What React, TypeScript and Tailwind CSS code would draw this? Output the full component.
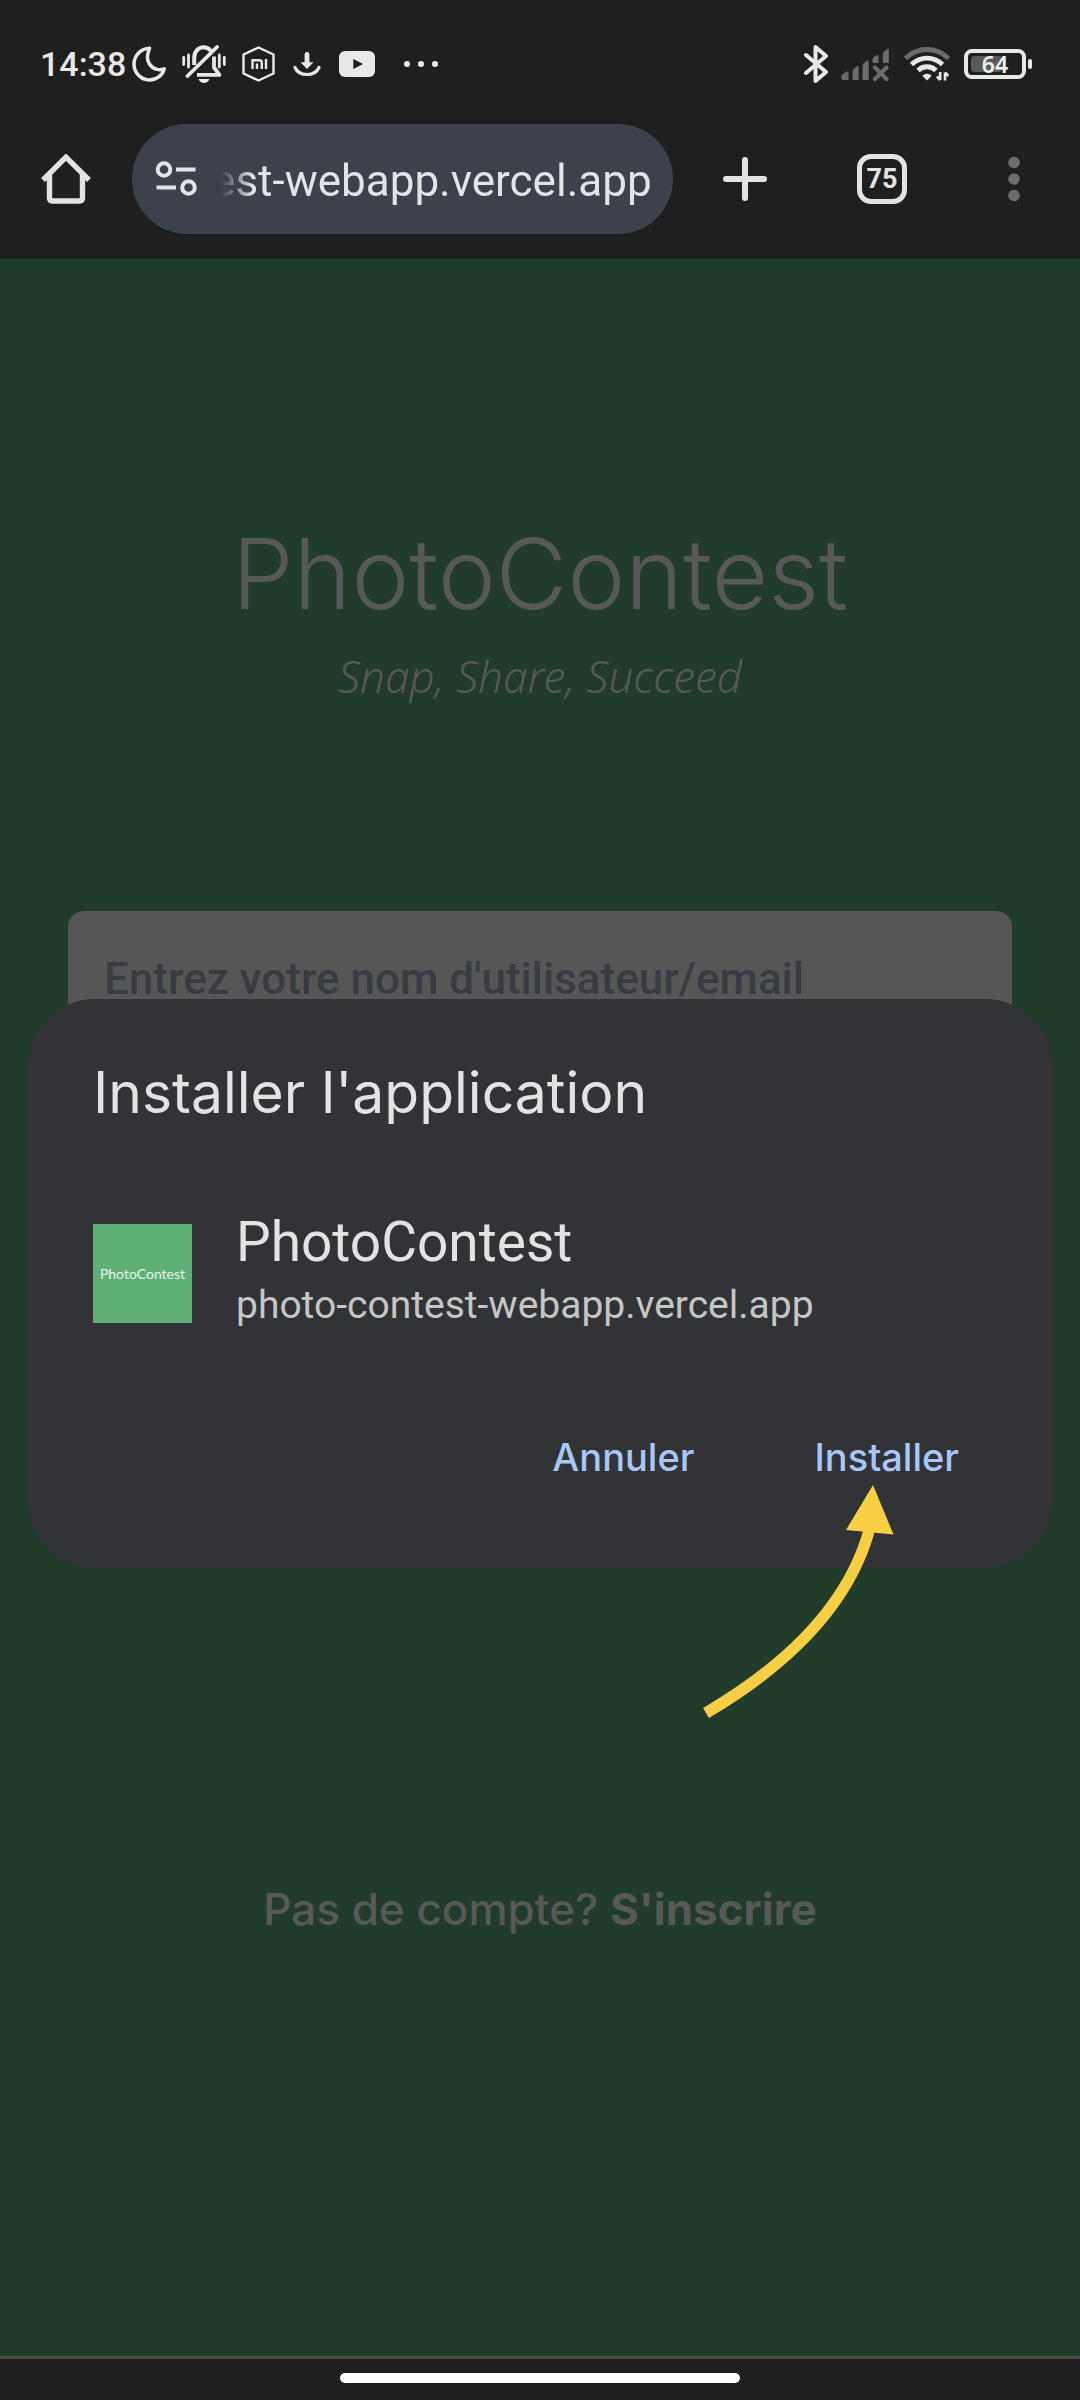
import { useEffect, useRef } from "react";

function MoonIcon() {
  return (
    <svg width="34" height="36" viewBox="0 0 34 36" fill="none" stroke="#e8e8e8" strokeWidth="3.5" strokeLinejoin="round" aria-hidden="true">
      <path d="M17.5 2.2C9 2.4 2 9.3 2 18c0 8.900 7 16 15.500 16 7.500 0 13.200-5 14.700-11.200-2.200.9-4.700 1.200-7.200.6-6.500-1.500-10.600-8-9.300-14.600.4-2.400 1-4.400 1.800-6.600z" />
    </svg>
  );
}

function BellOffIcon() {
  return (
    <svg width="44" height="38" viewBox="0 0 44 38" fill="none" stroke="#e8e8e8" strokeWidth="3.2" aria-hidden="true">
      <path d="M12.200 20V13C12.200 6.500 16.500 2.300 21.500 2.300c3 0 5.500 1.300 7.300 3.400" strokeWidth="4" />
      <path d="M5.500 31 35 2" strokeWidth="3.800" strokeLinecap="round" />
      <path d="M15 29.800H37.500L32 22.500V11.500" strokeWidth="3.800" strokeLinejoin="round" />
      <path d="M16.500 34h11c-1.200 2.600-3 4-5.500 4s-4.300-1.400-5.500-4z" fill="#e8e8e8" stroke="none" />
      <path d="M1.700 12.500v7M6.500 10v12M37.300 10v12M42.300 12.500v7" strokeWidth="2.800" strokeLinecap="round" />
    </svg>
  );
}

function MiIcon() {
  return (
    <svg width="33" height="36" viewBox="0 0 33 36" fill="none" stroke="#e8e8e8" strokeWidth="2.4" aria-hidden="true">
      <path d="M16.500 1.500 31.500 8.500V27.500L16.500 34.500 1.500 27.500V8.500z" strokeLinejoin="round" />
      <path d="M10.500 23V14.200h6.800q2.500 0 2.500 2.500V23M15 23v-5.500M24 23V13" />
    </svg>
  );
}

function DownloadIcon() {
  return (
    <svg width="28" height="25" viewBox="0 0 28 25" fill="none" stroke="#e8e8e8" aria-hidden="true">
      <path d="M14 2.500V11" strokeWidth="4.800" strokeLinecap="round" />
      <path d="M7.500 10.200h13L14 17z" fill="#e8e8e8" stroke="none" />
      <path d="M2 15.500c2 4.500 6.500 7 12 7s10-2.500 12-7" strokeWidth="3.200" strokeLinecap="round" />
    </svg>
  );
}

function VideoIcon() {
  return (
    <svg width="36" height="26" viewBox="0 0 36 26" aria-hidden="true">
      <rect width="36" height="26" rx="6" fill="#e8e8e8" />
      <path d="M14.300 8v10L24 13z" fill="#1f1f1f" />
    </svg>
  );
}

function MoreNotificationsIcon() {
  return (
    <svg width="36" height="8" viewBox="0 0 36 8" fill="#e8e8e8" aria-hidden="true">
      <circle cx="4" cy="4" r="3" />
      <circle cx="18" cy="4" r="3" />
      <circle cx="32" cy="4" r="3" />
    </svg>
  );
}

function BluetoothIcon() {
  return (
    <svg width="24" height="38" viewBox="0 0 24 38" fill="none" stroke="#e8e8e8" strokeWidth="4" strokeLinecap="round" strokeLinejoin="round" aria-hidden="true">
      <path d="M2 10 22 27 11.500 36V2L22 11 2 28" />
    </svg>
  );
}

function SignalIcon() {
  return (
    <svg width="50" height="34" viewBox="0 0 50 34" fill="#6b6b6b" aria-hidden="true">
      <path d="M.5 29q0-1.500 1.500-2.300l4-2.200q1.500-.5 1.500 1V33H2q-1.500 0-1.500-1.500zM11.500 24q0-1.500 1.500-2.500l3-2.200q1.700-.8 1.700 1V33h-4.700q-1.500 0-1.500-1.500zM21.500 18.500q0-1.500 1.300-2.500l3.200-2.500q1.700-.8 1.700 1V33H23q-1.500 0-1.500-1.500zM31.500 12.500q0-1.500 1.300-2.300l3.200-2.200q1.500-.5 1.500 1V16h-4.500q-1.500 0-1.500-1.500zM41.800 7q0-1.500 1.300-2.500l3.200-2.500q1.500-.8 1.500 1V16h-4.500q-1.500 0-1.500-1.500z" />
      <path d="M34 20.500 45.500 32M45.500 20.500 34 32" stroke="#6b6b6b" strokeWidth="4.200" strokeLinecap="round" />
    </svg>
  );
}

function WifiIcon() {
  return (
    <svg width="47" height="36" viewBox="0 0 47 36" fill="none" stroke="#e8e8e8" strokeWidth="4.800" aria-hidden="true">
      <path d="M1.500 12.500C13.500.5 32.500.5 44.500 12.500" stroke="#6b6b6b" />
      <path d="M7.500 18.500c9-8.500 22-8.500 31 0" />
      <path d="M14 24.500c5-5 13-5 18 0" />
      <path d="M18.300 29.700c2.700-2.700 6.700-2.700 9.400 0L23 34.500z" fill="#e8e8e8" stroke="none" />
      <path d="M36.200 26v8M33 30.500l3.200 3.500M41 34.500v-8M44.300 30 41 26.500" strokeWidth="2.600" />
    </svg>
  );
}

function Battery() {
  return (
    <div className="flex items-center gap-0.5" role="img" aria-label="Batterie 64 %">
      <div className="relative flex h-[30px] w-[62px] items-center justify-center rounded-lg border-4 border-[#e8e8e8]">
        <span className="absolute left-[3px] h-4 w-[31px] rounded-sm bg-[#5a5a5a]" />
        <span className="relative font-['Noto_Sans',sans-serif] text-[23px] leading-6 font-semibold text-[#f0f0f0]">64</span>
      </div>
      <span className="h-[10px] w-1 rounded-sm bg-[#e8e8e8]" />
    </div>
  );
}

function HomeIcon() {
  return (
    <svg width="50" height="50" viewBox="0 0 50 50" fill="none" stroke="#e3e3e3" strokeWidth="5.400" strokeLinejoin="round" aria-hidden="true">
      <path d="M2 26 25 3.200 48 26" strokeLinejoin="miter" strokeMiterlimit="2" />
      <path d="M8.500 21v23q0 3 3 3h27q3 0 3-3V21" />
    </svg>
  );
}

function SiteSettingsIcon() {
  return (
    <svg width="42" height="36" viewBox="0 0 42 36" fill="none" stroke="#e3e3e8" strokeWidth="4" aria-hidden="true">
      <circle cx="9" cy="8.500" r="6.300" />
      <path d="M21 8.500h19.500M1.500 26.500H21" />
      <circle cx="33.500" cy="26.500" r="6.300" />
    </svg>
  );
}

function PlusIcon() {
  return (
    <svg width="44" height="44" viewBox="0 0 44 44" stroke="#e3e3e3" strokeWidth="6" strokeLinecap="round" aria-hidden="true">
      <path d="M22 3v38M3 22h38" />
    </svg>
  );
}

function MenuIcon() {
  return (
    <svg width="12" height="46" viewBox="0 0 12 46" fill="#6d6d6d" aria-hidden="true">
      <circle cx="6" cy="6.500" r="5.800" />
      <circle cx="6" cy="23" r="5.800" />
      <circle cx="6" cy="39.500" r="5.800" />
    </svg>
  );
}

function StatusBar() {
  return (
    <div className="flex h-[124px] items-center justify-between pt-1 pr-12 pl-10">
      <div className="flex items-center gap-1.5">
        <time className="font-['Roboto',sans-serif] text-[34px] leading-10 font-medium text-[#e8e8e8]">14:38</time>
        <div className="flex items-center gap-7">
          <div className="flex items-center gap-4">
            <MoonIcon />
            <BellOffIcon />
            <MiIcon />
            <span className="flex items-center gap-[18px] pl-0.5">
              <DownloadIcon />
              <VideoIcon />
            </span>
          </div>
          <MoreNotificationsIcon />
        </div>
      </div>
      <div className="flex items-center gap-[13px]">
        <BluetoothIcon />
        <SignalIcon />
        <WifiIcon />
        <Battery />
      </div>
    </div>
  );
}

function AddressBar() {
  const field = useRef<HTMLInputElement>(null);
  useEffect(() => {
    if (field.current) field.current.scrollLeft = field.current.scrollWidth;
  }, []);
  return (
    <div className="mr-[50px] ml-[41px] flex h-[110px] min-w-0 flex-1 items-center gap-6 rounded-full bg-[#3c414b] pr-[21px] pl-[23px]">
      <button type="button" aria-label="Informations sur le site" className="shrink-0">
        <SiteSettingsIcon />
      </button>
      <input
        ref={field}
        type="text"
        aria-label="Adresse"
        defaultValue="photo-contest-webapp.vercel.app"
        className="h-16 min-w-0 flex-1 bg-transparent pt-1 font-['Roboto',sans-serif] text-[44px] text-[#e3e3e8] outline-none [mask-image:linear-gradient(to_right,transparent,black_32px)]"
      />
    </div>
  );
}

function Toolbar() {
  return (
    <div className="flex items-center pr-[60px] pb-[22px] pl-[41px]">
      <button type="button" aria-label="Accueil">
        <HomeIcon />
      </button>
      <AddressBar />
      <button type="button" aria-label="Nouvel onglet">
        <PlusIcon />
      </button>
      <button
        type="button"
        aria-label="75 onglets"
        className="mr-[101px] ml-[90px] flex size-[50px] items-center justify-center rounded-[14px] border-[5px] border-[#e3e3e3] font-['Roboto',sans-serif] text-[27px] leading-8 font-bold text-[#e3e3e3]"
      >
        75
      </button>
      <button type="button" aria-label="Menu">
        <MenuIcon />
      </button>
    </div>
  );
}

function LoginPage() {
  return (
    <main className="flex-1 bg-[#213c2a] px-[68px] pt-[255px] text-[#575957]">
      <h1 className="text-center font-['Inter',sans-serif] text-[98px] leading-[120px] font-light">PhotoContest</h1>
      <p className="mt-3 text-center font-['Noto_Sans',sans-serif] text-[44px] leading-[60px] font-light italic">Snap, Share, Succeed</p>
      <form className="mt-[205px]">
        <input
          type="text"
          aria-label="Nom d'utilisateur ou email"
          placeholder="Entrez votre nom d'utilisateur/email"
          className="h-[136px] w-full rounded-2xl bg-[#565656] px-9 font-['Roboto',sans-serif] text-[44px] font-medium outline-none placeholder:text-[#383b42] placeholder:opacity-100"
        />
      </form>
      <p className="mt-[832px] text-center font-['Inter',sans-serif] text-[44px] leading-[60px] font-medium">
        Pas de compte?{" "}
        <a href="#inscription" className="font-bold">
          S'inscrire
        </a>
      </p>
    </main>
  );
}

function PointerArrow() {
  return (
    <svg className="pointer-events-none absolute top-[53px] right-[88px]" width="200" height="240" viewBox="0 0 200 240" aria-hidden="true">
      <path d="M7 233Q141 154 170 51" fill="none" stroke="#f6cf45" strokeWidth="11.500" />
      <path d="M174 5 147 50 194.500 54.500z" fill="#f6cf45" />
    </svg>
  );
}

function InstallDialog() {
  return (
    <div className="absolute inset-x-0 top-[167px] bottom-0 flex items-center px-[27px]">
      <section role="dialog" aria-labelledby="install-title" className="w-full rounded-[68px] bg-[#323336] px-[66px] pt-[58px] pb-[81px]">
        <h2 id="install-title" className="font-['Inter',sans-serif] text-[57px] leading-[72px] text-[#e3e3e3]">
          Installer l'application
        </h2>
        <div className="mt-[81px] flex items-center gap-11">
          <div className="flex size-[99px] shrink-0 items-center justify-center bg-[#5faf76] font-['Lato',sans-serif] text-[14px] text-[#e9f6ec]">
            PhotoContest
          </div>
          <div className="min-w-0 font-['Roboto',sans-serif]">
            <p className="text-[55px] leading-[64px] text-[#e3e3e3]">PhotoContest</p>
            <p className="text-[39px] leading-[62px] text-[#c4c7c5]">photo-contest-webapp.vercel.app</p>
          </div>
        </div>
        <div className="mt-[91px] flex justify-end gap-16 font-['Inter',sans-serif] text-[38px] leading-[60px] font-medium text-[#a8c7fa]">
          <button type="button" className="px-7">
            Annuler
          </button>
          <div className="relative">
            <button type="button" className="px-7">
              Installer
            </button>
            <PointerArrow />
          </div>
        </div>
      </section>
    </div>
  );
}

export default function App() {
  return (
    <div className="relative flex min-h-screen flex-col bg-[#1f1f1f]">
      <header className="border-b-[3px] border-[#19211c]">
        <StatusBar />
        <Toolbar />
      </header>
      <LoginPage />
      <footer className="flex h-11 items-center justify-center border-t-[3px] border-[#484848] pb-1">
        <span className="h-[10px] w-[400px] rounded-full bg-white" />
      </footer>
      <InstallDialog />
    </div>
  );
}
